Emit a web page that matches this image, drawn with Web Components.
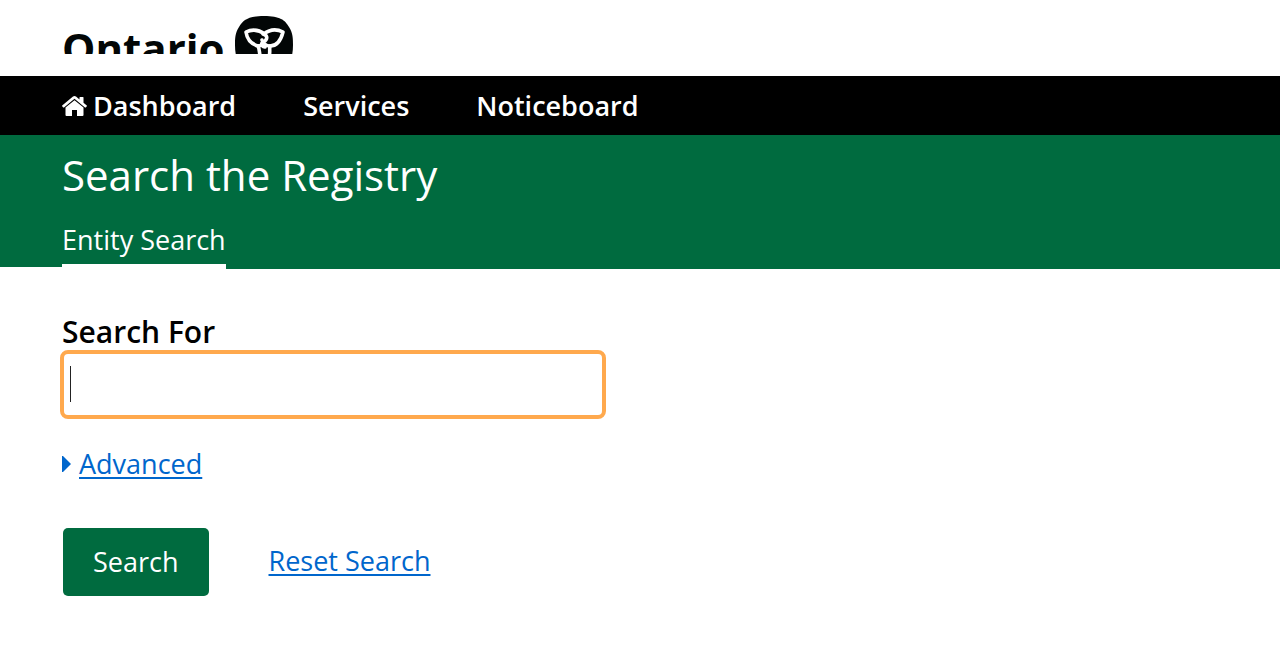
<!DOCTYPE html>
<html lang="en">
<head>
<meta charset="utf-8">
<meta name="viewport" content="width=device-width, initial-scale=1">
<title>Search the Registry</title>
<style>
  body { margin: 0; background: #fff; color: #000; font-family: "Open Sans", "Noto Sans", sans-serif; font-size: 27px; --gutter: 62px; --green: #006b3f; --link: #0066cc; }
</style>
</head>
<body>
<registry-page></registry-page>
<script>
function define(name, html) {
  const template = document.createElement('template');
  template.innerHTML = html;
  customElements.define(name, class extends HTMLElement {
    constructor() {
      super();
      this.attachShadow({ mode: 'open' }).append(template.content.cloneNode(true));
    }
  });
}

define('ontario-logo', `
  <style>
    :host { display: block; height: 54px; overflow: hidden; padding-left: var(--gutter); box-sizing: border-box; }
    div { display: flex; gap: 9px; padding-top: 15px; color: #020606; font-size: 42px; font-weight: 700; line-height: 66px; }
    svg { flex: none; display: block; }
  </style>
  <div><span>Ontario</span>
    <svg width="60" height="60" viewBox="0 0 60 60" aria-hidden="true">
      <path d="M30 1C46 1 51 5 55 12C59 18 59 24 59 30C59 50 50 59 30 59C10 59 1 50 1 30C1 24 1 18 5 12C9 5 14 1 30 1Z" fill="#020606"/>
      <g fill="none" stroke="#fff" stroke-width="3.600" stroke-linejoin="round" stroke-linecap="round">
        <path d="M31 19C25 15 18 14 12 17C13 24 17 29 24 31C26 31 28 30 28 28"/>
        <path d="M30 19C36 14 43 14 49 17C47 25 43 31 36 31C32 31 29 28 28 25"/>
        <path d="M29 19C33 20 34 23 31 26C27 28 27 31 31 32"/>
        <path d="M24 31C26 35 25 39 27 44L30 50L34 44C37 39 35 35 36 31"/>
      </g>
    </svg>
  </div>`);

define('main-nav', `
  <style>
    :host { display: block; background: #000; }
    nav { display: flex; flex-wrap: wrap; gap: 0 67px; padding: 0 var(--gutter); }
    a { display: flex; align-items: center; gap: 6px; color: #fff; font-weight: 600; line-height: 59px; text-decoration: none; }
    svg { fill: #fff; }
  </style>
  <nav aria-label="Main">
    <a href="#dashboard"><svg width="25" height="20" viewBox="0 0 25 20" aria-hidden="true">
      <path d="M12.5 4.2L21.5 11.6V19Q21.5 20 20.5 20H15V14H10V20H4.500Q3.500 20 3.500 19V11.600Z"/>
      <path d="M12.500 0Q13.300 0 14 .6L17.500 3.500V1.500Q17.500 1 18 1H21Q21.500 1 21.500 1.500V6.800L24.800 9.600Q25.100 10 24.800 10.300L23.800 11.400Q23.400 11.700 23 11.400L12.500 2.800L2 11.400Q1.600 11.700 1.200 11.400L.2 10.300Q-.1 10 .2 9.600L11 .6Q11.700 0 12.500 0Z"/>
    </svg>Dashboard</a>
    <a href="#services">Services</a>
    <a href="#noticeboard">Noticeboard</a>
  </nav>`);

define('page-banner', `
  <style>
    :host { display: block; background: var(--green); color: #fff; }
    h1 { margin: 0; padding: 11px var(--gutter) 0; font-size: 42px; line-height: 58px; font-weight: 400; }
    nav { display: flex; align-items: flex-end; padding-top: 11px; }
    nav::before { content: ""; width: var(--gutter); border-bottom: 2px solid #fff; }
    ::slotted(a) { color: inherit; text-decoration: none; line-height: 49px; border-bottom: 5px solid #fff; }
  </style>
  <h1><slot name="title"></slot></h1>
  <nav aria-label="Searches"><slot></slot></nav>`);

define('search-form', `
  <style>
    :host { display: block; padding: 43px var(--gutter); }
    form { margin: 0; }
    label { display: block; font-size: 30px; line-height: 40px; font-weight: 600; }
    input { display: block; box-sizing: border-box; width: 100%; max-width: 546px; height: 69px; margin: -2px -2px 0; padding: 0 6px; border: 4px solid #ffa94d; border-radius: 8px; outline: none; font: inherit; caret-color: transparent;
      background: linear-gradient(#222, #222) 6px 12px / 1px 36px no-repeat #fff; }
    a { color: var(--link); text-decoration-thickness: 2px; text-underline-offset: 3px; }
    .advanced { display: flex; align-items: center; gap: 8px; margin-top: 27px; line-height: 36px; }
    .actions { display: flex; align-items: center; flex-wrap: wrap; gap: 60px; margin: 46px 1px 0; }
    .actions a { padding-bottom: 3px; }
    button { height: 68px; padding: 0 30px 2px; border: 0; border-radius: 5px; background: var(--green); color: #fff; font: inherit; }
  </style>
  <form>
    <label for="query">Search For</label>
    <input id="query" type="text">
    <div class="advanced">
      <svg width="9" height="16" viewBox="0 0 9 16" fill="#0066cc" aria-hidden="true"><path d="M0 0H1L9 8L1 16H0Z"/></svg>
      <a href="#advanced">Advanced</a>
    </div>
    <div class="actions"><button type="button">Search</button><a href="#reset">Reset Search</a></div>
  </form>`);

define('registry-page', `
  <style>
    :host { display: block; }
    header { padding-bottom: 22px; }
  </style>
  <header><ontario-logo></ontario-logo></header>
  <main-nav></main-nav>
  <main>
    <page-banner><span slot="title">Search the Registry</span><a href="#entity">Entity Search</a></page-banner>
    <search-form></search-form>
  </main>`);
</script>
</body>
</html>
